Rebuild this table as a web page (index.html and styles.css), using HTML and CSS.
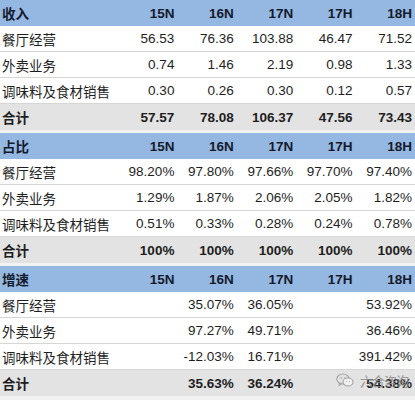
FILE: index.html
```html
<!DOCTYPE html>
<html lang="zh">
<head>
<meta charset="utf-8">
<link rel="stylesheet" href="styles.css">
</head>
<body>
<div class="page">
  <table class="sheet">
    <colgroup><col class="c-label"><col><col><col><col><col></colgroup>
    <tr class="hd"><td class="lbl">收入</td><td>15N</td><td>16N</td><td>17N</td><td>17H</td><td>18H</td></tr>
    <tr class="row"><td class="lbl">餐厅经营</td><td>56.53</td><td>76.36</td><td>103.88</td><td>46.47</td><td>71.52</td></tr>
    <tr class="row"><td class="lbl">外卖业务</td><td>0.74</td><td>1.46</td><td>2.19</td><td>0.98</td><td>1.33</td></tr>
    <tr class="row"><td class="lbl">调味料及食材销售</td><td>0.30</td><td>0.26</td><td>0.30</td><td>0.12</td><td>0.57</td></tr>
    <tr class="tot"><td class="lbl">合计</td><td>57.57</td><td>78.08</td><td>106.37</td><td>47.56</td><td>73.43</td></tr>
    <tr class="gap"><td colspan="6"></td></tr>
    <tr class="hd"><td class="lbl">占比</td><td>15N</td><td>16N</td><td>17N</td><td>17H</td><td>18H</td></tr>
    <tr class="row"><td class="lbl">餐厅经营</td><td>98.20%</td><td>97.80%</td><td>97.66%</td><td>97.70%</td><td>97.40%</td></tr>
    <tr class="row"><td class="lbl">外卖业务</td><td>1.29%</td><td>1.87%</td><td>2.06%</td><td>2.05%</td><td>1.82%</td></tr>
    <tr class="row"><td class="lbl">调味料及食材销售</td><td>0.51%</td><td>0.33%</td><td>0.28%</td><td>0.24%</td><td>0.78%</td></tr>
    <tr class="tot"><td class="lbl">合计</td><td>100%</td><td>100%</td><td>100%</td><td>100%</td><td>100%</td></tr>
    <tr class="gap"><td colspan="6"></td></tr>
    <tr class="hd"><td class="lbl">增速</td><td>15N</td><td>16N</td><td>17N</td><td>17H</td><td>18H</td></tr>
    <tr class="row"><td class="lbl">餐厅经营</td><td></td><td>35.07%</td><td>36.05%</td><td></td><td>53.92%</td></tr>
    <tr class="row"><td class="lbl">外卖业务</td><td></td><td>97.27%</td><td>49.71%</td><td></td><td>36.46%</td></tr>
    <tr class="row"><td class="lbl">调味料及食材销售</td><td></td><td>-12.03%</td><td>16.71%</td><td></td><td>391.42%</td></tr>
    <tr class="tot"><td class="lbl">合计</td><td></td><td>35.63%</td><td>36.24%</td><td></td><td>54.38%</td></tr>
  </table>
  <div class="watermark">
    <svg class="wm-icon" width="18" height="15" viewBox="0 0 18 15">
      <ellipse cx="7" cy="6" rx="6.2" ry="5" fill="none" stroke="#9a9a9a" stroke-width="1.1"/>
      <path d="M3.5 10.2 L2.8 12.6 L5.6 11" fill="none" stroke="#9a9a9a" stroke-width="1"/>
      <ellipse cx="12" cy="9" rx="5" ry="4" fill="#f4f4f4" stroke="#9a9a9a" stroke-width="1.1"/>
      <circle cx="5" cy="5" r="0.8" fill="#9a9a9a"/>
      <circle cx="9" cy="5" r="0.8" fill="#9a9a9a"/>
      <circle cx="10.5" cy="8.6" r="0.6" fill="#9a9a9a"/>
      <circle cx="13.5" cy="8.6" r="0.6" fill="#9a9a9a"/>
    </svg>
    <span class="wm-text">六合咨询</span>
  </div>
</div>
</body>
</html>
```

FILE: styles.css
```css
html, body {
  margin: 0;
  padding: 0;
  background: #f2f2f2;
}

.page {
  position: relative;
  width: 415px;
  height: 400px;
  overflow: hidden;
}

.sheet {
  width: 415px;
  border-collapse: collapse;
  table-layout: fixed;
  font-family: "Liberation Sans", "Noto Sans CJK SC", sans-serif;
  font-size: 13.5px;
  color: #1e1e1e;
}

.c-label {
  width: 118px;
}

.sheet td {
  padding: 0 3px 0 0;
  text-align: right;
  white-space: nowrap;
  overflow: visible;
}

.sheet td.lbl {
  text-align: left;
  padding-left: 2px;
}

.hd td {
  height: 26px;
  background: #95b8e3;
  font-weight: bold;
  color: #141a2a;
}

.row td {
  height: 25px;
  background: #ffffff;
  border-bottom: 1px solid #d6d6d6;
}

.tot td {
  height: 26px;
  background: #e3e3e3;
  font-weight: bold;
}

.gap td {
  height: 3px;
  padding: 0;
  background: #f2f2f2;
}

.watermark {
  position: absolute;
  left: 336px;
  top: 371px;
  display: flex;
  align-items: center;
  gap: 6px;
  opacity: 0.85;
}

.wm-text {
  font-family: "Noto Sans CJK SC", sans-serif;
  font-size: 13px;
  color: #8a8a8a;
  letter-spacing: -1px;
}
```
